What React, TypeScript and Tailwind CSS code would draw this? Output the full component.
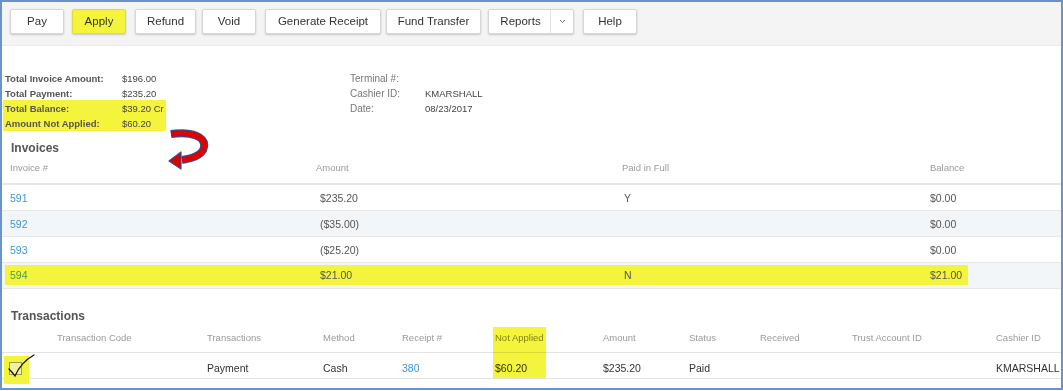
import React from "react";

const font = { fontFamily: '"Liberation Sans", Arial, sans-serif' };

function Btn({ children, w, ml, yellow }: { children: React.ReactNode; w: string; ml: string; yellow?: boolean }) {
  return (
    <div
      className={`${w} ${ml} h-[25px] flex items-center justify-center rounded-[2px] border text-[11.5px] text-[#333] shadow-[0_1px_2px_rgba(0,0,0,0.18)] ${
        yellow ? "bg-[#f4f43c] border-[#dede3a]" : "bg-white border-[#d6d6d6]"
      }`}
    >
      {children}
    </div>
  );
}

export default function App() {
  const invRows = [
    { n: "591", amt: "$235.20", pif: "Y", bal: "$0.00", bg: "bg-white" },
    { n: "592", amt: "($35.00)", pif: "", bal: "$0.00", bg: "bg-[#f3f6f9]" },
    { n: "593", amt: "($25.20)", pif: "", bal: "$0.00", bg: "bg-white" },
  ];
  const tCols = "grid grid-cols-[55px_150px_116px_79px_93px_108px_86px_71px_92px_144px_1fr]";
  return (
    <div style={font} className="relative w-[1063px] h-[390px] bg-white border-2 border-[#6a93c8] overflow-hidden">
      {/* toolbar */}
      <div className="h-[44px] bg-[#f4f4f4] border-b border-[#ebebeb] flex items-start pt-[7px] pl-[8px]">
        <Btn w="w-[54px]" ml="ml-0">Pay</Btn>
        <Btn w="w-[54px]" ml="ml-[8px]" yellow>Apply</Btn>
        <Btn w="w-[61px]" ml="ml-[9px]">Refund</Btn>
        <Btn w="w-[54px]" ml="ml-[6px]">Void</Btn>
        <Btn w="w-[116px]" ml="ml-[9px]">Generate Receipt</Btn>
        <Btn w="w-[95px]" ml="ml-[5px]">Fund Transfer</Btn>
        <div className="ml-[7px] w-[86px] h-[25px] flex rounded-[2px] border border-[#d6d6d6] bg-white text-[11.5px] text-[#333] shadow-[0_1px_2px_rgba(0,0,0,0.18)]">
          <div className="flex-1 flex items-center justify-center pl-[2px]">Reports</div>
          <div className="w-[23px] border-l border-[#e2e2e2] flex items-center justify-center text-[#777]">
            <svg width="7" height="5" viewBox="0 0 7 5"><path d="M1 1 L3.5 3.5 L6 1" fill="none" stroke="#777" strokeWidth="1" /></svg>
          </div>
        </div>
        <Btn w="w-[54px]" ml="ml-[9px]">Help</Btn>
      </div>

      {/* summary */}
      <div className="flex pt-[25px] text-[9.5px] leading-[15px] text-[#444]">
        <div className="ml-[1px] w-[347px]">
          <div className="grid grid-cols-[117px_auto] pl-[2px]">
            <span className="font-bold text-[#555]">Total Invoice Amount:</span><span>$196.00</span>
            <span className="font-bold text-[#555]">Total Payment:</span><span>$235.20</span>
          </div>
          <div className="grid grid-cols-[117px_auto] pl-[2px] w-[163px] bg-[#f4f43c] -mt-[1px] pt-[1px]">
            <span className="font-bold text-[#555]">Total Balance:</span><span>$39.20 Cr</span>
            <span className="font-bold text-[#555]">Amount Not Applied:</span><span>$60.20</span>
          </div>
        </div>
        <div className="grid grid-cols-[75px_auto] content-start">
          <span className="text-[#777] text-[10px]">Terminal #:</span><span></span>
          <span className="text-[#777] text-[10px]">Cashier ID:</span><span>KMARSHALL</span>
          <span className="text-[#777] text-[10px]">Date:</span><span>08/23/2017</span>
        </div>
      </div>

      {/* invoices */}
      <div className="mt-[9px] pl-[9px] h-[16px] text-[12px] font-bold leading-[16px] text-[#555]">Invoices</div>
      <div className="grid grid-cols-[314px_306px_308px_1fr] h-[29px] items-center pb-[3px] text-[9.5px] text-[#9a9a9a] border-b-2 border-[#e6e6e6]">
        <span className="pl-[8px]">Invoice #</span>
        <span>Amount</span>
        <span>Paid in Full</span>
        <span>Balance</span>
      </div>
      {invRows.map((r) => (
        <div key={r.n} className={`grid grid-cols-[314px_306px_308px_1fr] h-[26px] items-center pt-[2px] text-[10.5px] text-[#555] border-b border-[#e8e8e8] ${r.bg}`}>
          <span className="pl-[8px] text-[#3b97d6]">{r.n}</span>
          <span className="pl-[4px]">{r.amt}</span>
          <span className="pl-[2px]">{r.pif}</span>
          <span>{r.bal}</span>
        </div>
      ))}
      <div className="h-[26px] bg-[#f3f6f9] border-b border-[#e8e8e8] pl-[3px] pt-[2px]">
        <div className="grid grid-cols-[311px_306px_308px_38px] w-[963px] h-[20px] items-center pt-[1px] bg-[#f4f43c] text-[10.5px] text-[#555]">
          <span className="pl-[5px] text-[#4c9a4c]">594</span>
          <span className="pl-[4px]">$21.00</span>
          <span className="pl-[2px]">N</span>
          <span>$21.00</span>
        </div>
      </div>

      {/* transactions */}
      <div className="mt-[19px] pl-[9px] h-[16px] text-[12px] font-bold leading-[16px] text-[#555]">Transactions</div>
      <div className="relative">
        <div className={`${tCols} h-[29px] items-center pt-[1px] text-[9.5px] text-[#9a9a9a] border-b border-[#e3e3e3]`}>
          <span></span>
          <span>Transaction Code</span>
          <span>Transactions</span>
          <span>Method</span>
          <span>Receipt #</span>
          <span className="text-[#8a8a3a]">Not Applied</span>
          <span>Amount</span>
          <span>Status</span>
          <span>Received</span>
          <span>Trust Account ID</span>
          <span>Cashier ID</span>
        </div>
        <div className={`${tCols} h-[26px] items-center pt-[6px] text-[10.5px] text-[#333] border-b border-[#e3e3e3]`}>
          <span></span>
          <span></span>
          <span>Payment</span>
          <span>Cash</span>
          <span className="text-[#3b97d6]">380</span>
          <span>$60.20</span>
          <span>$235.20</span>
          <span>Paid</span>
          <span></span>
          <span></span>
          <span>KMARSHALL</span>
        </div>
        {/* Not Applied highlight */}
        <div className="absolute left-[491px] top-[3px] w-[53px] h-[51px] bg-[#f4f43c] mix-blend-multiply" />
        {/* checkbox highlight */}
        <div className="absolute left-[2px] top-[32px] w-[25px] h-[28px] bg-[#f4f43c] flex items-start">
          <div className="ml-[5px] mt-[6px] w-[13px] h-[13px] border border-[#9a9a5a] bg-[#f2f29a]" />
        </div>
        <svg className="absolute left-[4px] top-[28px]" width="32" height="30" viewBox="0 0 32 30">
          <path d="M3 17 C5 19 7 21 9 24 C12 17 17 9 28 3" fill="none" stroke="#111" strokeWidth="1.3" strokeLinecap="round" />
        </svg>
      </div>

      {/* red curved arrow annotation */}
      <svg className="absolute left-[164px] top-[124px]" width="44" height="46" viewBox="0 0 44 46">
        <path d="M5 8 C26 5 40 11 38 21 C37 28 29 32 16 34" fill="none" stroke="#2f4f8f" strokeWidth="8" />
        <path d="M5 8 C26 5 40 11 38 21 C37 28 29 32 16 34" fill="none" stroke="#e00000" strokeWidth="5.5" />
        <polygon points="3,35 15,26 15,43" fill="#e00000" stroke="#2f4f8f" strokeWidth="1.2" strokeLinejoin="round" />
      </svg>
    </div>
  );
}
